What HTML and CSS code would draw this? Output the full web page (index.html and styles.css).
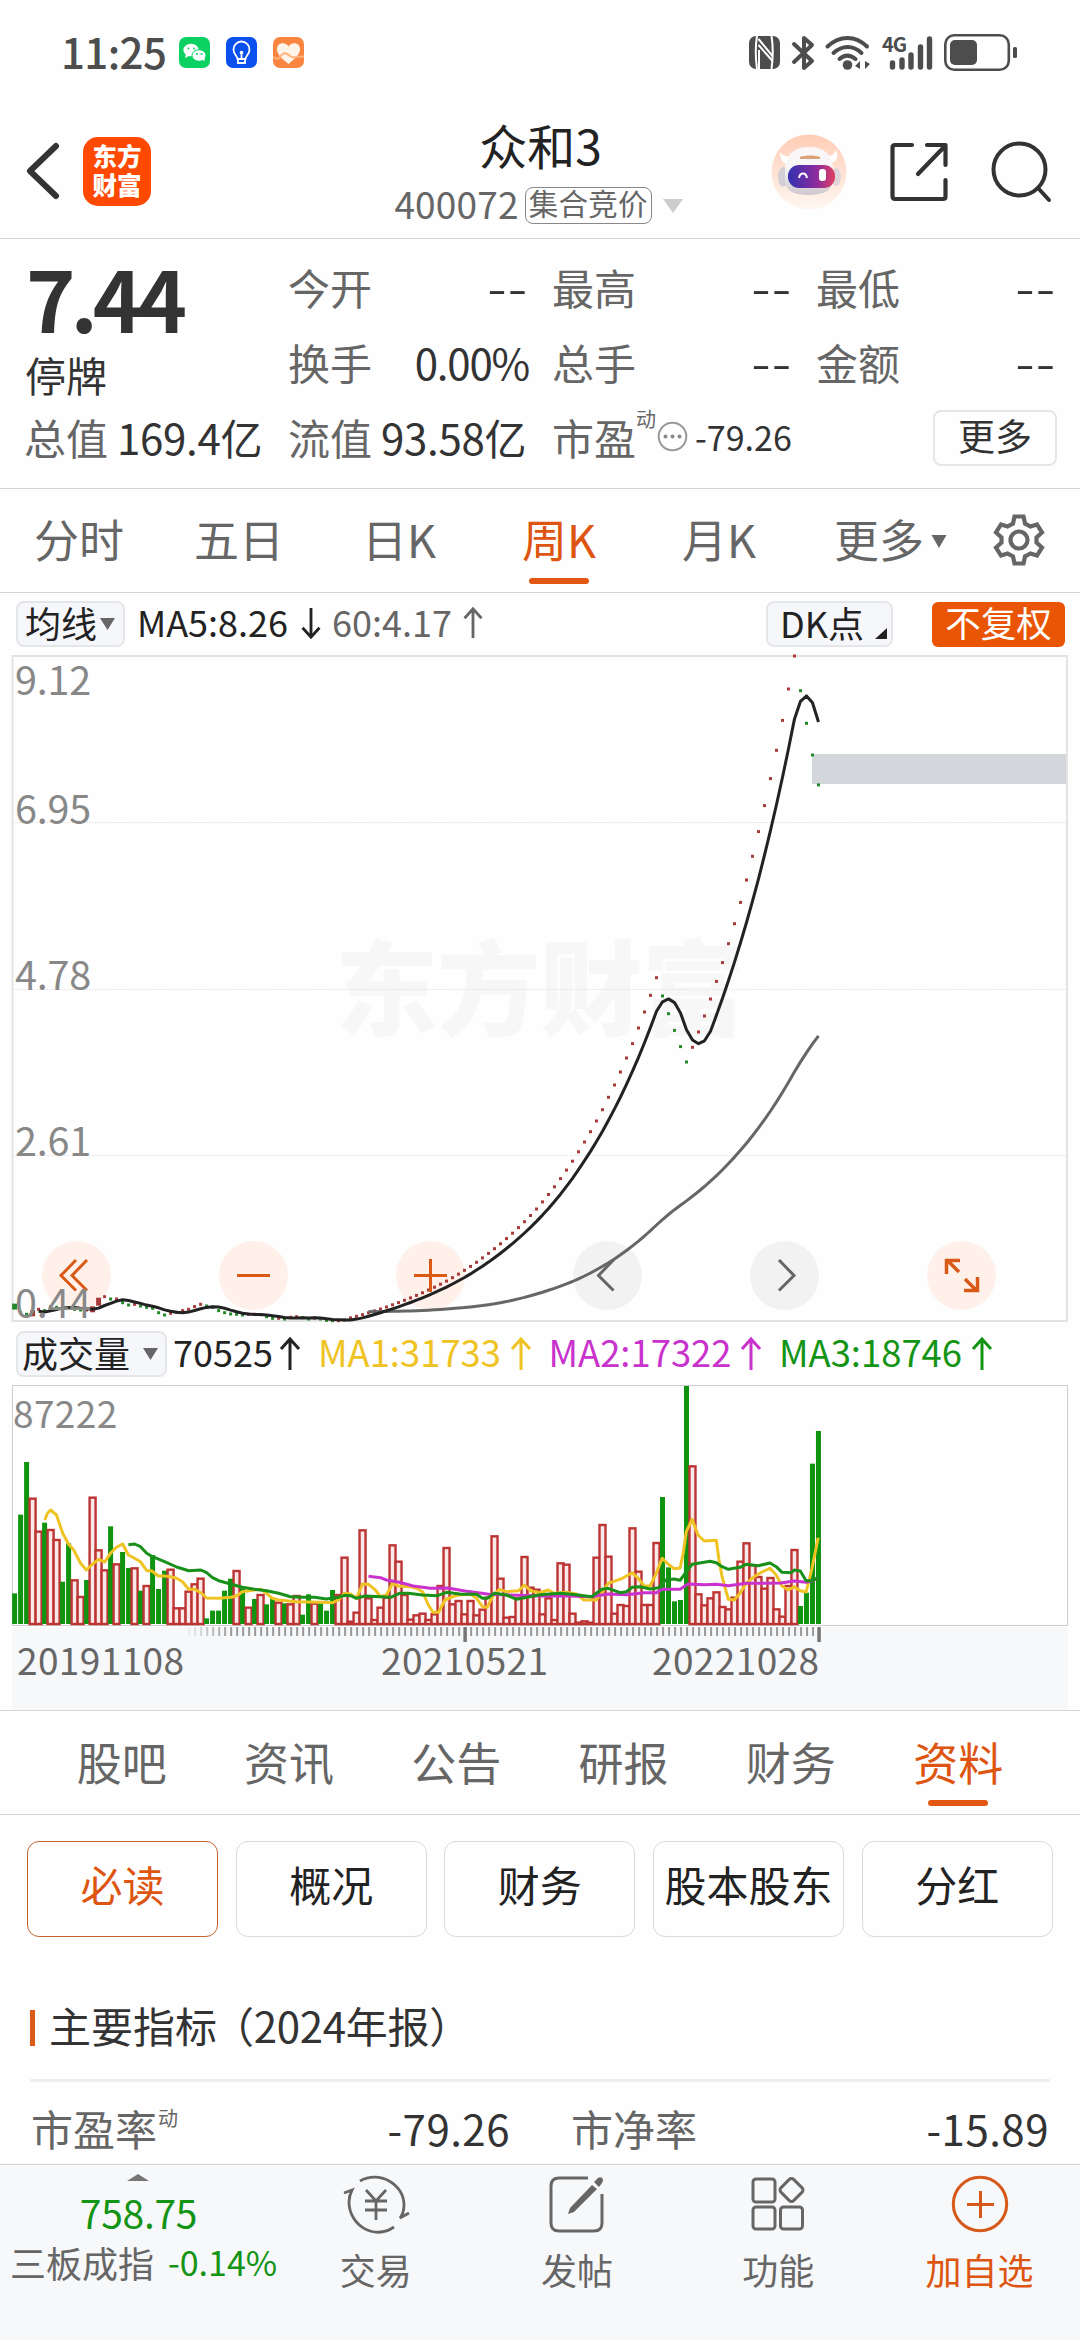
FILE: index.html
```html
<!DOCTYPE html>
<html lang="zh-CN">
<head>
<meta charset="utf-8">
<title>众和3 400072</title>
<link rel="stylesheet" href="styles.css">
</head>
<body>
<div class="status">
  <span class="time">11:25</span>
  <svg class="app-icon" viewBox="0 0 31 31"><rect width="31" height="31" rx="7" fill="#0ad161"/><ellipse cx="12" cy="13" rx="7.6" ry="6.3" fill="#fff"/><path d="M7 17l-1 4 4-2z" fill="#fff"/><ellipse cx="20" cy="18.500" rx="7" ry="5.800" fill="#fff" stroke="#0ad161"/><path d="M23 22l2.500 2.500v-4z" fill="#fff"/><g fill="#0ad161"><circle cx="9.500" cy="11.500" r="1"/><circle cx="15" cy="11.500" r="1"/><circle cx="18" cy="17" r="1"/><circle cx="22.500" cy="17" r="1"/></g></svg>
  <svg class="app-icon" viewBox="0 0 31 31"><rect width="31" height="31" rx="7" fill="#0a50ee"/><g fill="none" stroke="#fff" stroke-width="1.800"><path d="M11.500 22c0-3-4-4.500-4-9.500a8 8 0 0 1 16 0c0 5-4 6.500-4 9.500z"/><path d="M12 22v4h7v-4M15.500 22v-7"/></g><circle cx="15.500" cy="15.500" r="1.800" fill="#fff"/></svg>
  <svg class="app-icon" viewBox="0 0 31 31"><rect width="31" height="31" rx="7" fill="#fa8541"/><path d="M15.500 27C8 21 4 17 4 12c0-6 8-8 11.500-2.500C19 4 27 6 27 12c0 5-4 9-11.500 15z" fill="#fff4ea"/><path d="M0 20c3 1 4 3 6 1 3-3 4-6 8-4s5 5 9 3l8-.5" fill="none" stroke="#ffb27c" stroke-width="2"/></svg>
  <div class="signals">
    <svg width="31" height="33" viewBox="0 0 31 33"><rect width="31" height="33" rx="7" fill="#4d4d4d"/><path d="M8 0c-1.500 9-1.500 22 0 33" fill="none" stroke="#fff" stroke-width="2"/><path d="M22.500 0c1.500 9 1.500 22 0 33" fill="none" stroke="#fff" stroke-width="2"/><path d="M9.500 9l14 16M9.500 3l14 17M10 14v19" stroke="#fff" stroke-width="2"/></svg>
    <svg width="22" height="36" viewBox="0 0 22 36"><path d="M2 9l18 17-8 7V3l8 7L2 27" fill="none" stroke="#4d4d4d" stroke-width="4" stroke-linecap="round" stroke-linejoin="round"/></svg>
    <svg width="45" height="36" viewBox="0 0 45 36"><g fill="none" stroke="#4d4d4d" stroke-width="4" stroke-linecap="round"><path d="M2.500 11.500c12-11.500 28-11.500 39.500 0M8.500 18c9-8 19.500-8 28 0M14.500 24c5-4.500 10.500-4.500 16 0"/></g><circle cx="22.500" cy="30" r="4.800" fill="#4d4d4d"/><path d="M35 26v8l-5-3zM38 26v8M40 26v8l5-5z" fill="#4d4d4d"/></svg>
    <svg width="51" height="36" viewBox="0 0 51 36"><text class="net" x="0" y="17">4G</text><g stroke="#4d4d4d" stroke-width="5.400" stroke-linecap="round"><path d="M10.500 28v4M20 25v7M29 20v12M38.500 12v20M47.500 4v28"/></g></svg>
    <svg width="74" height="37" viewBox="0 0 74 37"><rect x="1.300" y="1.300" width="63.500" height="34.400" rx="9" fill="none" stroke="#4d4d4d" stroke-width="2.600"/><rect x="6" y="6" width="27" height="25" rx="5" fill="#4d4d4d"/><rect x="69" y="13" width="4" height="11" rx="1.500" fill="#4d4d4d"/></svg>
  </div>
</div>

<header class="header">
  <div class="head-left">
    <svg width="34" height="58" viewBox="0 0 34 58"><path d="M30 4L4 29l26 25" fill="none" stroke="#333" stroke-width="6" stroke-linecap="round" stroke-linejoin="round"/></svg>
    <div class="logo">东方<br>财富</div>
  </div>
  <div class="head-mid">
    <div class="stock">众和3</div>
    <div class="code"><span>400072</span><span class="tag">集合竞价</span><svg width="22" height="14" viewBox="0 0 22 14"><path d="M1 0h20L11 14z" fill="#ccc"/></svg></div>
  </div>
  <div class="head-right">
    <svg width="76" height="76" viewBox="0 0 76 76"><defs><linearGradient id="halo" x1="0" y1="0" x2="0" y2="1"><stop offset="0" stop-color="#ffcdb5"/><stop offset="1" stop-color="#fff7f2"/></linearGradient><linearGradient id="visor"><stop offset="0" stop-color="#3330b0"/><stop offset=".6" stop-color="#8a2c9e"/><stop offset="1" stop-color="#e04060"/></linearGradient><linearGradient id="shell" x1="0" y1="0" x2="0" y2="1"><stop offset=".4" stop-color="#f8f6f7"/><stop offset="1" stop-color="#cfc8cf"/></linearGradient></defs><circle cx="38" cy="38" r="37.500" fill="url(#halo)"/><ellipse cx="12" cy="43" rx="5" ry="10" fill="#d4ced6"/><ellipse cx="65" cy="43" rx="5" ry="9" fill="#ddd5da"/><path d="M9 18c0 7 3 12 8 12l6-9c-7 3-11 1-14-3zM65 16c3 7 0 13-6 13l-5-8c6 2 9 0 11-5z" fill="#fff"/><path d="M14 37c0-16 9-24 24-24s24 8 24 23v9c0 11-9 16-24 16S14 57 14 46z" fill="url(#shell)"/><rect x="17" y="31" width="47" height="23" rx="11" fill="url(#visor)"/><path d="M29 23c6-2 14-2 20 0v2H29z" fill="#d9a176"/><path d="M28 44c1-6 7-6 8 0" fill="none" stroke="#fff" stroke-width="2"/><rect x="48" y="35" width="7" height="12" rx="3" fill="#fff"/></svg>
    <svg width="58" height="60" viewBox="0 0 58 60"><g fill="none" stroke="#333" stroke-width="4.200" stroke-linecap="round" stroke-linejoin="round"><path d="M22 3H5q-2.500 0-2.500 2.500V54Q2.500 57 5 57h48q2.500 0 2.500-2.500V38M37 3h18.500v20M55 4L28 32"/></g></svg>
    <svg width="60" height="62" viewBox="0 0 60 62"><g fill="none" stroke="#333" stroke-width="4" stroke-linecap="round"><circle cx="28.500" cy="28.500" r="26"/><path d="M47 47l11 12"/></g></svg>
  </div>
</header>

<section class="quote">
  <div class="price-col"><b class="price">7.44</b><span class="state">停牌</span></div>
  <div class="cells">
    <div><span>今开</span><i class="none">--</i></div><div><span>最高</span><i class="none">--</i></div><div><span>最低</span><i class="none">--</i></div>
    <div><span>换手</span><i class="tight">0.00%</i></div><div><span>总手</span><i class="none">--</i></div><div><span>金额</span><i class="none">--</i></div>
  </div>
  <div class="values">
    <div class="cap"><span>总值</span><i>169.4亿</i></div>
    <div class="cap"><span>流值</span><i>93.58亿</i></div>
    <div class="pe"><span>市盈</span><sup>动</sup><svg width="31" height="31" viewBox="0 0 31 31"><circle cx="15.500" cy="15.500" r="13.800" fill="none" stroke="#999" stroke-width="2"/><g fill="#888"><circle cx="8.500" cy="15.500" r="2"/><circle cx="15.500" cy="15.500" r="2"/><circle cx="22.500" cy="15.500" r="2"/></g></svg><i>-79.26</i></div>
    <div class="more">更多</div>
  </div>
</section>

<nav class="periods">
  <span>分时</span><span>五日</span><span>日K</span><span class="on">周K</span><span>月K</span><span class="drop">更多<svg width="16" height="13" viewBox="0 0 16 13"><path d="M.5 0h15L8 13z" fill="#666"/></svg></span>
  <svg class="gear" width="52" height="52" viewBox="0 0 52 52"><g fill="none" stroke="#666" stroke-width="4.200"><path d="M21.500 2.500h9l1.500 7 5.500 3 6.500-2 5 8-5.500 5v5l5.500 5-5 8-6.500-2-5.500 3-1.500 7h-9l-1.500-7-5.500-3-6.500 2-5-8 5.500-5v-5l-5.500-5 5-8 6.500 2 5.500-3z"/><circle cx="26" cy="26" r="8.500"/></g></svg>
</nav>

<div class="ma-row">
  <div class="pill avg">均线<svg width="15" height="12" viewBox="0 0 15 12"><path d="M0 0h15L7.500 12z" fill="#666"/></svg></div>
  <span class="ma5">MA5:8.26</span><svg class="arrow dark" viewBox="0 0 20 34"><path d="M10 1v31M1 22l9 10 9-10"/></svg>
  <span class="ma60">60:4.17</span><svg class="arrow grey" viewBox="0 0 20 34"><path d="M10 33V2M1 12l9-10 9 10"/></svg>
  <div class="pill dk">DK点<svg width="12" height="11" viewBox="0 0 12 11"><path d="M12 0v11H0z" fill="#222"/></svg></div>
  <div class="adjust">不复权</div>
</div>

<div class="price-chart">
  <svg width="1080" height="668" viewBox="0 655 1080 668">
    <text class="mark" x="335" y="1028" textLength="410">东方财富</text>
    <g stroke="#dadada" stroke-dasharray="1 1.500"><path d="M12 822.500h1055M12 989.500h1055M12 1155.500h1055"/></g>
    <rect x="812" y="754" width="255" height="30" fill="#d3d7dc"/>
    <path d="M12.500 656h1054.500v665H12.500z" fill="none" stroke="#e3e3e3" stroke-width="2"/>
    <g fill="#fff1ea"><circle cx="76.500" cy="1275.500" r="34.500"/><circle cx="253.500" cy="1275.500" r="34.500"/><circle cx="430.500" cy="1275.500" r="34.500"/><circle cx="961.500" cy="1275.500" r="34.500"/></g>
    <g fill="#f2f2f2"><circle cx="607.500" cy="1275.500" r="34.500"/><circle cx="784.500" cy="1275.500" r="34.500"/></g>
    <g id="closes"></g>
    <g fill="none" stroke-width="3" stroke-linejoin="round"><path id="line60" stroke="#666"/><path id="line5" stroke="#222"/></g>
    <g fill="none" stroke="#d95a17" stroke-width="3"><path d="M76 1260l-15 15.500 15 15M87 1260l-15 15.500 15 15M237 1275.500h33M414 1275.500h33M430.500 1259v33"/><path stroke-width="3.500" d="M959 1272l-12-12M946.500 1274v-13.500H960M965 1279l12 12M964 1290.500h13.500V1277"/></g>
    <g fill="none" stroke="#666" stroke-width="3"><path d="M613.500 1260l-15 15.500 15 15M779 1260l15 15.500-15 15"/></g>
    <g class="axis"><text x="15" y="695">9.12</text><text x="15" y="824">6.95</text><text x="15" y="990">4.78</text><text x="15" y="1156">2.61</text><text x="15" y="1318">0.44</text></g>
  </svg>
</div>

<div class="vol-row">
  <div class="pill vol">成交量<svg width="15" height="12" viewBox="0 0 15 12"><path d="M0 0h15L7.500 12z" fill="#666"/></svg></div>
  <span class="v0">70525</span><svg class="arrow dark" viewBox="0 0 20 34"><path d="M10 33V2M1 12l9-10 9 10"/></svg>
  <span class="v1">MA1:31733</span><svg class="arrow yellow" viewBox="0 0 20 34"><path d="M10 33V2M1 12l9-10 9 10"/></svg>
  <span class="v2">MA2:17322</span><svg class="arrow violet" viewBox="0 0 20 34"><path d="M10 33V2M1 12l9-10 9 10"/></svg>
  <span class="v3">MA3:18746</span><svg class="arrow green" viewBox="0 0 20 34"><path d="M10 33V2M1 12l9-10 9 10"/></svg>
</div>

<svg width="1080" height="243" viewBox="0 1384 1080 243">
  <path d="M12.500 1385.500h1055v240H12.500z" fill="none" stroke="#ccc"/>
  <text class="peak" x="13" y="1428">87222</text>
  <g id="volumes"></g>
  <g fill="none" stroke-width="3" stroke-linejoin="round"><path id="vma1" stroke="#efc324"/><path id="vma2" stroke="#c932cc"/><path id="vma3" stroke="#18901a"/></g>
</svg>
<svg width="1080" height="83" viewBox="0 1627 1080 83">
  <rect x="12" y="1627" width="1056" height="83" fill="#f7f8fa"/>
  <g id="ticks" fill="#999"></g>
  <g class="dates"><text x="17" y="1675">20191108</text><text x="381" y="1675">20210521</text><text x="652" y="1675">20221028</text></g>
</svg>

<nav class="sections"><span>股吧</span><span>资讯</span><span>公告</span><span>研报</span><span>财务</span><span class="on">资料</span></nav>

<div class="chips"><span class="on">必读</span><span>概况</span><span>财务</span><span>股本股东</span><span>分红</span></div>

<section class="metrics">
  <h2>主要指标<span class="year">（2024年报）</span></h2>
  <div class="metric-row">
    <div><span>市盈率<sup>动</sup></span><i>-79.26</i></div>
    <div><span>市净率</span><i>-15.89</i></div>
  </div>
</section>

<footer class="bar">
  <div class="index">
    <svg width="22" height="7" viewBox="0 0 22 7"><path d="M0 7L11 0l11 7z" fill="#777"/></svg>
    <b>758.75</b>
    <div class="index-name"><span>三板成指</span><i>-0.14%</i></div>
  </div>
  <div class="action"><svg width="66" height="60" viewBox="0 0 66 60"><g fill="none" stroke="#666" stroke-width="2.800"><path d="M17 7C36-4 61 10 61 31c0 5-1 9-4 13l9-5M51 53C31 67 6 51 6 28c0-4 1-8 3-12L1 19"/><path d="M23 16l10 11 10-11M33 27v19M22 27h22M22 36h22"/></g></svg><span>交易</span></div>
  <div class="action"><svg width="56" height="60" viewBox="0 0 56 60"><path d="M39 4H10q-8 0-8 8v37q0 8 8 8h35q8 0 8-8V20" fill="none" stroke="#666" stroke-width="3"/><path d="M43 11l5 4-23 23-6 2 2-6zM45 8l4-4q2-1.500 4 0t0 5l-3 4z" fill="#666"/></svg><span>发帖</span></div>
  <div class="action"><svg width="54" height="60" viewBox="0 0 54 60"><g fill="none" stroke="#666" stroke-width="3"><rect x="2" y="5" width="22" height="23" rx="3"/><rect x="2" y="33" width="22" height="22" rx="3"/><rect x="29.500" y="33" width="22" height="22" rx="3"/><rect x="31.500" y="7" width="18" height="18" rx="3" transform="rotate(45 40.500 16)"/></g></svg><span>功能</span></div>
  <div class="action add"><svg width="58" height="60" viewBox="0 0 58 60"><g fill="none" stroke="#d4591a" stroke-width="3"><circle cx="29" cy="30" r="26.700"/><path d="M16 30.500h27M29.500 17v27"/></g></svg><span>加自选</span></div>
</footer>
<script src="chart.js"></script>
</body>
</html>
```
FILE: styles.css
```css
* { box-sizing: border-box; }
body { margin: 0; width: 1080px; height: 2340px; overflow: hidden; background: #fefefe; color: #333; font-family: "Noto Sans CJK SC", "Noto Sans", sans-serif; display: flex; flex-direction: column; }
body > * { flex-shrink: 0; }
i { font-style: normal; }
svg { display: block; flex-shrink: 0; overflow: visible; }

.status { height: 100px; display: flex; align-items: flex-start; padding: 37px 62px 0 61px; color: #4d4d4d; }
.time { font-size: 42px; line-height: 31px; width: 118px; font-weight: 500; letter-spacing: -.6px; margin-top: -2px; }
.app-icon { width: 31px; height: 31px; margin-right: 16px; }
.signals { margin-left: auto; margin-top: -3px; display: flex; align-items: center; gap: 11.500px; }
.net { font-size: 20px; font-weight: 700; fill: #4d4d4d; letter-spacing: -1px; }

.header { height: 139px; border-bottom: 1px solid #d6d6d6; display: grid; grid-template-columns: 360px 1fr 360px; }
.head-left { display: flex; align-items: center; padding: 4px 0 0 26px; gap: 23px; }
.logo { width: 68px; height: 69px; border-radius: 15px; background: #ff4800; color: #fff; font-weight: 900; font-size: 24.500px; line-height: 29px; text-align: center; padding-top: 4px; }
.head-mid { text-align: center; display: flex; flex-direction: column; align-items: center; }
.stock { font-size: 48px; line-height: 60px; color: #222; margin-top: 14px; padding-left: 1px; }
.code { display: flex; align-items: center; font-size: 37px; line-height: 36px; color: #666; margin: 13px 2px 0 0; letter-spacing: .2px; }
.code span:first-child { margin-top: -5px; }
.tag { font-size: 29.500px; line-height: 29px; height: 37px; border: 1.500px solid #888; border-radius: 8px; padding: 0 3px; margin: 0 10px 0 6px; }
.head-right { display: flex; align-items: center; justify-content: flex-end; padding: 5px 29px 0 0; gap: 43px; }

.quote { height: 250px; border-bottom: 1px solid #d6d6d6; display: grid; grid-template-columns: 288px 1fr; grid-template-rows: 162px 74px; font-size: 42px; }
.quote span { color: #666; }
.price-col { display: flex; flex-direction: column; padding-left: 26px; }
.price { font-size: 84px; line-height: 70px; margin-top: 23px; letter-spacing: -5px; font-weight: 700; }
.price-col .state { color: #333; line-height: 50px; margin-top: 17px; font-size: 41px; margin-left: -1px; }
.cells { display: grid; grid-template-columns: repeat(3, 240px); column-gap: 24px; grid-template-rows: 75px 75px; line-height: 60px; padding-top: 18px; }
.cells > div { display: flex; justify-content: space-between; }
.none { font-size: 58px; font-weight: 300; letter-spacing: 1px; margin-top: -3px; padding-right: 0; }
.tight { letter-spacing: -1.200px; margin-right: -1px; }
.values { grid-column: 1 / -1; display: flex; padding-left: 24px; line-height: 50px; padding-top: 11px; }
.cap { width: 264px; display: flex; gap: 9px; }
.cap i { letter-spacing: -.3px; }
.pe { display: flex; width: 381px; }
.pe sup, .metrics sup { font-size: 20px; line-height: 20px; color: #666; }
.pe sup { margin-top: -3px; width: 21px; }
.pe svg { margin-top: 9px; }
.pe i { font-size: 34px; margin: 0 0 0 7px; }
.more { width: 124px; height: 56px; border: 2px solid #e4e6e9; border-radius: 8px; text-align: center; font-size: 37px; line-height: 46px; margin-top: -2px; }

.periods { height: 104px; border-bottom: 1px solid #d6d6d6; font-size: 45px; color: #666; display: grid; grid-template-columns: repeat(5, 160px) 160px 1fr; line-height: 100px; text-align: center; margin-left: -1px; }
.on { color: #dd5510; position: relative; }
.periods .on::after, .sections .on::after { content: ""; position: absolute; left: calc(50% - 30px); bottom: 8px; width: 60px; height: 6px; border-radius: 3px; background: #e25810; }
.drop { display: flex; align-items: center; gap: 7px; padding-left: 35px; white-space: nowrap; height: 100px; }
.drop svg { margin-top: 5px; }
.gear { margin: 25px 0 0 34px; }

.ma-row, .vol-row { display: flex; font-size: 36px; padding-left: 16px; }
.ma-row { height: 62px; padding-top: 8px; line-height: 44px; }
.vol-row { height: 61px; padding-top: 8px; line-height: 44px; }
.pill { height: 46px; border: 2px solid #e4e6e9; border-radius: 8px; background: #f6f7fa; color: #222; line-height: 38px; display: flex; align-items: center; padding-bottom: 4px; }
.pill svg { margin: 4px 0 0 3px; }
.avg { width: 109px; padding-left: 7px; }
.ma5 { width: 176px; padding-left: 12px; color: #222; margin-top: -2px; }
.ma60 { width: 142px; padding-left: 11px; color: #666; margin-top: -2px; }
.arrow { width: 20px; height: 34px; margin: 6px 0 0; fill: none; stroke-width: 3; }
.ma-row .arrow { height: 32px; }
.dark { stroke: #222; }
.grey { stroke: #666; }
.yellow { stroke: #efc324; }
.violet { stroke: #c932cc; }
.green { stroke: #149414; }
.dk { width: 127px; margin-left: auto; padding-left: 12px; }
.pill.dk svg { margin: 23px 0 0 11px; }
.adjust { width: 133px; height: 45px; margin: 1px 15px 0 39px; background: #e95504; color: #fff; border-radius: 6px; font-size: 35.500px; line-height: 40px; text-align: center; }
.price-chart { height: 668px; }
.mark { font-size: 103px; font-weight: 900; fill: #f7f7f7; }
.axis { font-size: 39.500px; fill: #888; letter-spacing: -.2px; }
.peak { font-size: 37px; fill: #888; letter-spacing: .4px; }
.dates { font-size: 37px; fill: #666; letter-spacing: .4px; }
.vol { width: 151px; padding-left: 4px; }
.vol-row > span { margin-top: -2px; white-space: nowrap; }
.pill.vol svg { margin-left: 13px; }
.v0 { width: 113px; padding-left: 6px; color: #222; }
.v1, .v2, .v3 { width: 210.500px; padding-left: 18px; font-size: 36.400px; }
.v1 { color: #efc324; }
.v2 { color: #c932cc; }
.v3 { color: #149414; }

.sections { height: 105px; border: solid #d6d6d6; border-width: 1px 0; padding: 0 38px; display: grid; grid-template-columns: repeat(6, 167.300px); font-size: 45px; line-height: 101px; color: #666; text-align: center; }
.chips { padding: 26px 27px 0; display: grid; grid-template-columns: repeat(5, 191px); column-gap: 17.700px; height: 164px; color: #222; font-size: 42px; text-align: center; line-height: 84px; }
.chips span { height: 96px; border: 1.500px solid #d7dada; border-radius: 12px; white-space: nowrap; }
.chips .on { border-color: #c4632f; color: #dd5510; }
.metrics { height: 185px; padding: 0 30px; font-size: 42px; }
.metrics h2 { font-size: 42px; font-weight: 400; line-height: 60px; margin: 0; height: 103px; padding: 16px 0 0 19px; border-bottom: 3px solid #eee; background: linear-gradient(#d95a17, #d95a17) 0 31px / 5px 36px no-repeat; }
.year { margin-left: -5px; letter-spacing: -.3px; }
.metric-row { display: grid; grid-template-columns: 479px 478px; column-gap: 61px; padding-left: 1px; line-height: 60px; padding-top: 16px; }
.metric-row > div { display: flex; justify-content: space-between; }
.metric-row span { color: #666; }
.metric-row i { letter-spacing: .5px; }
.metrics sup { vertical-align: 20px; margin-left: 1px; }

.bar { height: 176px; border-top: 1px solid #d0d3d6; background: #f7f8fa; display: grid; grid-template-columns: 275px repeat(4, 201.300px); color: #666; font-size: 36px; }
.index { display: flex; flex-direction: column; align-items: center; padding-top: 9px; }
.index b { font-weight: 400; font-size: 39px; color: #149414; line-height: 40px; margin: 11px 0 0 2px; letter-spacing: -.3px; }
.index-name { display: flex; gap: 14px; line-height: 40px; margin-top: 10px; padding-left: 12px; white-space: nowrap; }
.index-name i { color: #149414; font-size: 34px; }
.action { display: flex; flex-direction: column; align-items: center; padding-top: 9px; line-height: 50px; }
.action span { margin-top: 10px; }
.add { color: #dd5510; }
```
FILE: chart.js
```javascript
const STEP = 5.999, X0 = 14.6;
const cx = i => X0 + STEP * i;
const priceY = p => 656 + (9.12 - p) * 76.7;

// Weekly closes; the steady climb in the middle is filled in geometrically.
const closes = [.637,.558,.537,.55,.602,.585,.637,.628,.637,.624,.602,.593,.593,.602,.702,.767,.737,.737,.689,.658,.667,.645,.628,.615,.558,.528,.55,.563,.585,.602,.637,.667,.645,.628,.585,.558,.541,.537,.528,.537,.537,.532,.506,.485,.485,.476,.498,.506,.493,.476,.489,.476,.459,.454,.454,.463,.49];
const climb = (to, price) => {
  const start = closes.length - 1, from = closes[start];
  for (let i = start + 1; i <= to; i++) closes.push(from * Math.pow(price / from, (i - start) / (to - start)));
};
climb(72, .97);
climb(87, 1.91);
climb(96, 2.918);
closes.push(3.057,3.205,3.366,3.527,3.696,3.879,4.066,4.27,4.479,4.696,4.926,4.687,4.457,4.239,4.027,3.827,4.018,4.218,4.426,4.648,4.878,5.122,5.369,5.63,5.908,6.2,6.508,6.83,7.169,7.521,7.89,8.281,8.69,9.12,8.668,8.242,7.829,7.44);

const average = n => {
  let d = "";
  for (let i = n - 1; i < closes.length; i++) {
    const mean = closes.slice(i - n + 1, i + 1).reduce((a, b) => a + b) / n;
    d += (d ? "L" : "M") + cx(i).toFixed(1) + " " + priceY(mean).toFixed(1);
  }
  return d;
};
document.getElementById("line5").setAttribute("d", average(5));
document.getElementById("line60").setAttribute("d", average(60));
document.getElementById("closes").innerHTML = closes.map((p, i) => {
  const up = i ? p >= closes[i - 1] : false;
  const tall = { 0: 6, 3: 6, 13: 6, 14: 8 }[i] || 3;
  const wide = tall > 3 ? 5 : 3;
  return `<rect x="${(cx(i) - wide / 2).toFixed(1)}" y="${(priceY(p) - tall / 2).toFixed(1)}" width="${wide}" height="${tall}" fill="${up ? "#a83a3a" : "#23892a"}"/>`;
}).join("");

// Bar heights in thirds of a pixel; "g" marks a falling week.
const volumes = "92g 328g 486g 379 280 304g 285 255 127g 242g 134 84 132g 382 224 164 293g 182 216g 168g 170 100g 117 207g 105g 160g 166 50 50 100 122 139 17g 40g 40g 100g 136g 162 107g 52 75g 90 59g 77g 67 62g 62 87 28g 89g 64 62g 40g 102g 90 202 10 37 284 80 15 52 82 239 190 90 16 29 34 15 32 117 231 62 72 32 72 29 46 82 266 139 22 24 80 204 112 106 32 80 15 185 181 34 7 11 7 202 300 205 34 60 57 290 160 60 60 246 381g 170g 68g 72g 714g 476 92 59 80 98 54 47 82 190 245 179 144 109 141 47 25 117 225 54g 94g 481g 579g".split(" ");
document.getElementById("volumes").innerHTML = volumes.map((v, i) => {
  const h = parseInt(v, 10) / 3, x = cx(i);
  return v.endsWith("g")
    ? `<rect x="${x - 2.5}" y="${1624 - h}" width="5" height="${h}" fill="#10930f"/>`
    : `<rect x="${x - 3}" y="${1625 - h}" width="6" height="${Math.max(h - 1, 1)}" fill="#fbe9e9" stroke="#bd3434" stroke-width="2.4"/>`;
}).join("");

// Volume averages, sampled on a 2.904 x 3 grid below y = 1200.
const trace = (id, text) => {
  const d = text.split(" ").map((pair, k) => {
    const [x, y] = pair.split(",").map(Number);
    return (k ? "L" : "M") + (x / 2.904).toFixed(1) + " " + (1200 + y / 3).toFixed(1);
  }).join("");
  document.getElementById(id).setAttribute("d", d);
};
trace("vma1", "130,960 138,940 147,930 164,945 182,1000 199,1032 214,1050 234,1090 251,1110 269,1092 286,1078 304,1086 321,1060 338,1042 356,1032 373,1065 391,1075 408,1085 426,1112 440,1112 460,1128 478,1128 495,1130 513,1135 530,1145 548,1168 565,1168 583,1178 600,1194 635,1195 670,1192 687,1188 704,1175 722,1172 757,1168 774,1180 791,1195 809,1200 861,1205 931,1207 966,1208 983,1200 1000,1180 1018,1182 1035,1195 1053,1152 1070,1153 1088,1168 1105,1190 1122,1185 1140,1150 1157,1158 1192,1160 1210,1165 1227,1175 1244,1215 1257,1237 1274,1237 1292,1200 1310,1192 1331,1185 1366,1183 1384,1195 1401,1220 1415,1222 1430,1190 1450,1168 1471,1175 1506,1172 1523,1155 1541,1172 1568,1178 1592,1170 1609,1180 1644,1177 1673,1182 1696,1200 1731,1200 1748,1180 1766,1150 1808,1135 1836,1118 1853,1135 1871,1158 1888,1158 1906,1120 1923,1075 1940,1092 1958,1106 1975,1104 1984,1060 1993,995 2010,958 2027,1005 2045,1023 2080,1021 2088,1080 2097,1130 2115,1198 2132,1200 2149,1180 2167,1150 2184,1135 2202,1122 2219,1113 2236,1105 2254,1125 2271,1158 2289,1170 2306,1160 2324,1172 2341,1176 2358,1105 2376,1013");
trace("vma3", "373,1034 391,1032 408,1040 426,1060 443,1070 478,1085 513,1101 548,1112 583,1110 600,1118 617,1133 635,1142 670,1152 704,1162 739,1168 774,1172 809,1180 844,1190 879,1192 914,1192 948,1197 983,1192 1000,1186 1018,1187 1035,1195 1060,1188 1105,1190 1135,1192 1160,1180 1185,1180 1227,1185 1270,1187 1297,1177 1340,1183 1384,1183 1401,1195 1415,1195 1436,1180 1471,1185 1500,1198 1530,1192 1568,1184 1628,1180 1673,1184 1718,1190 1748,1168 1766,1165 1801,1178 1819,1175 1836,1162 1858,1160 1888,1167 1913,1163 1933,1140 1958,1137 1975,1141 1993,1115 2010,1093 2045,1087 2062,1084 2080,1088 2097,1100 2115,1108 2149,1102 2167,1093 2202,1097 2236,1089 2254,1100 2271,1117 2298,1118 2306,1110 2324,1113 2341,1142 2358,1142 2376,1133");
trace("vma2", "1070,1129 1105,1133 1122,1140 1160,1147 1200,1158 1250,1165 1300,1164 1350,1173 1420,1183 1500,1186 1568,1188 1628,1187 1718,1190 1766,1182 1819,1184 1871,1178 1906,1178 1923,1168 1975,1168 1998,1152 2045,1154 2080,1153 2115,1157 2167,1150 2268,1149 2306,1143 2341,1147 2358,1143 2376,1133");

let ticks = "";
for (let i = 29; i < 135; i++) {
  const major = i === 75 || i === 134;
  const w = major ? 3.5 : 2;
  ticks += `<rect x="${cx(i) - w / 2 + .6}" y="1627" width="${w}" height="${major ? 15 : 9}" opacity="${Math.min(1, (i - 28) / 8)}"${major ? ' fill="#777"' : ""}/>`;
}
document.getElementById("ticks").innerHTML = ticks;
```
